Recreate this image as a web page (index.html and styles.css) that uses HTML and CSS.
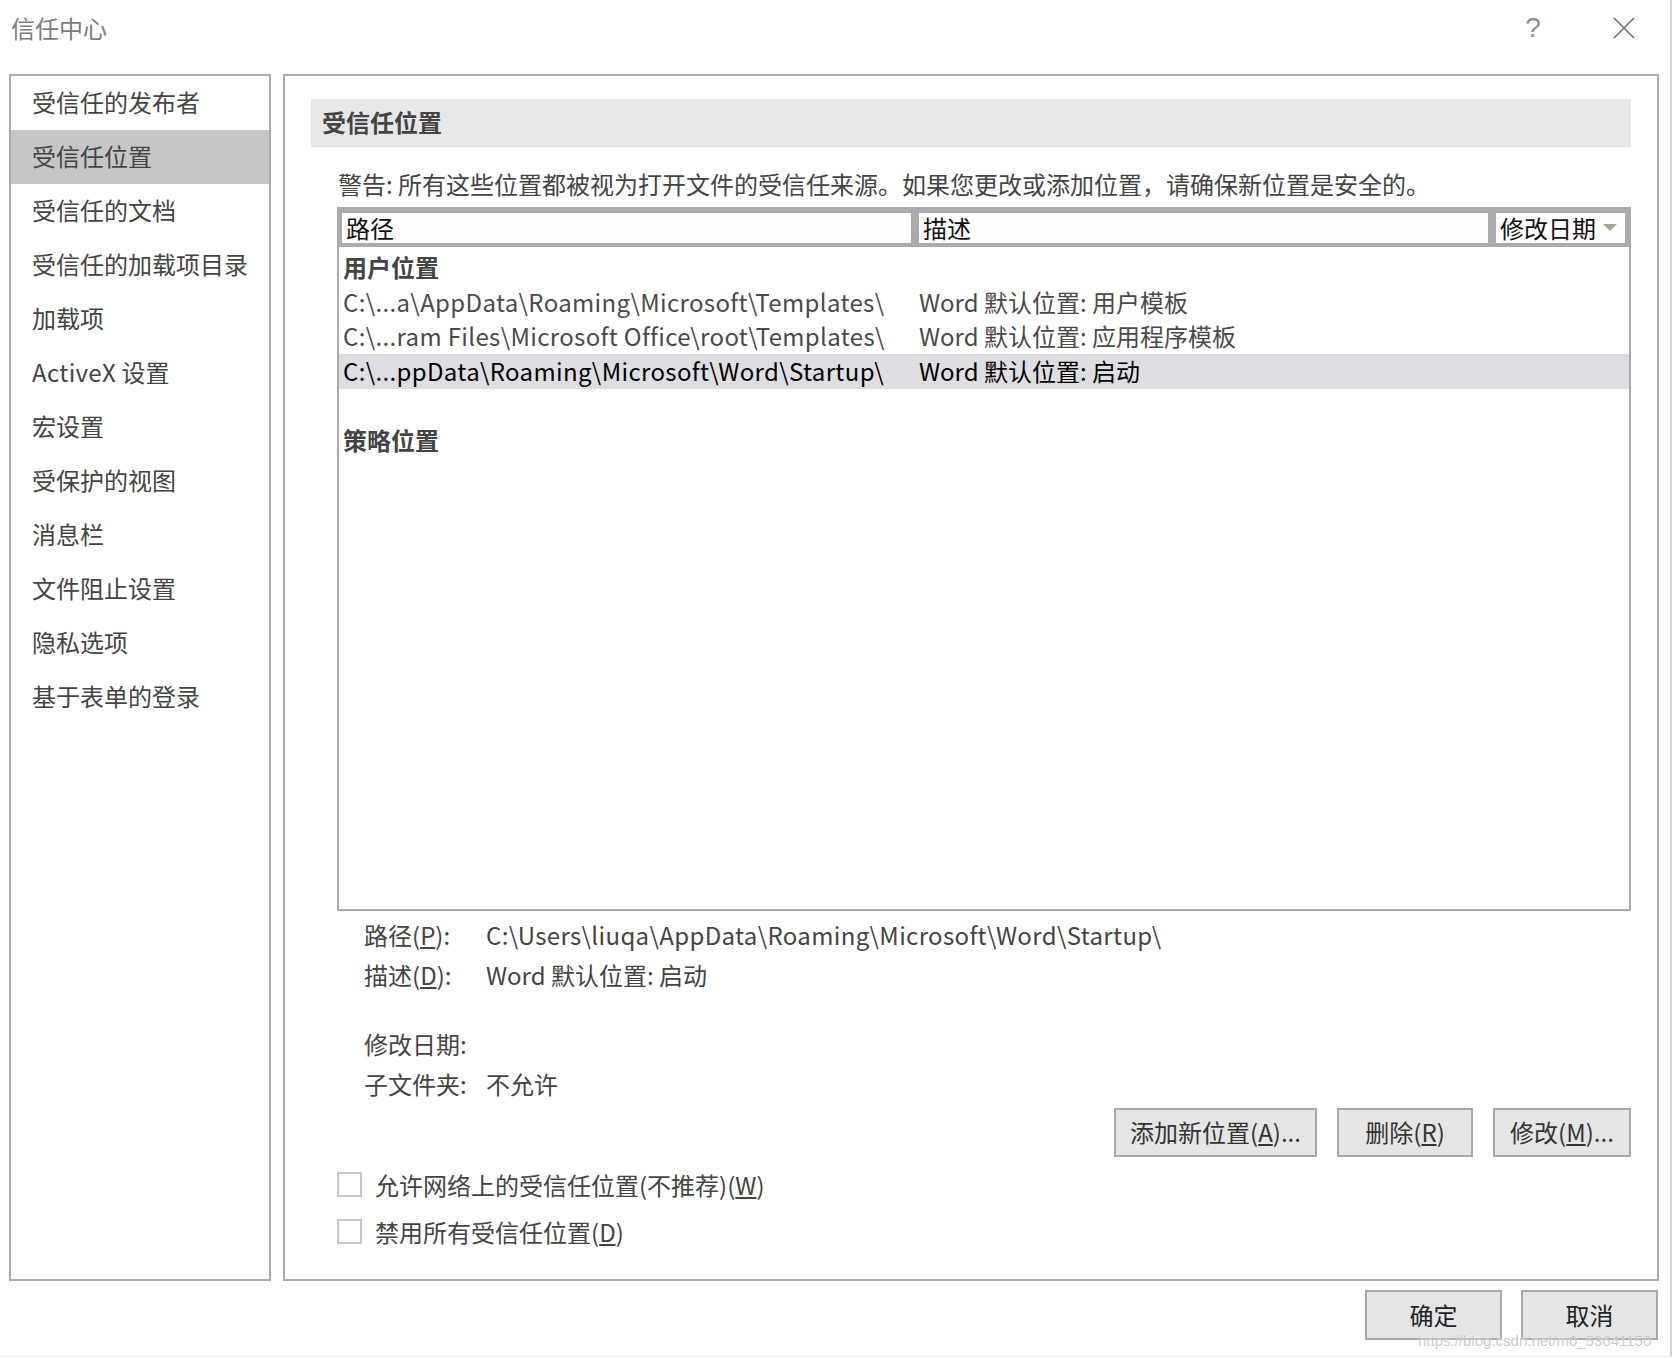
FILE: index.html
```html
<!DOCTYPE html>
<html lang="zh-CN">
<head>
    <meta charset="UTF-8">
    <title>信任中心</title>
    <link rel="stylesheet" href="styles.css">
</head>
<body>
<div class="dialog">
    <div class="titlebar">
        <span class="title">信任中心</span>
        <span class="help">?</span>
        <span class="close">
            <svg width="22" height="22" viewBox="0 0 22 22"><path d="M1 1 L21 21 M21 1 L1 21" stroke="#6f6f6f" stroke-width="1.6" fill="none"/></svg>
        </span>
    </div>

    <div class="main">
        <div class="nav">
            <div class="nav-item">受信任的发布者</div>
            <div class="nav-item active">受信任位置</div>
            <div class="nav-item">受信任的文档</div>
            <div class="nav-item">受信任的加载项目录</div>
            <div class="nav-item">加载项</div>
            <div class="nav-item"><span class="latin">ActiveX</span> 设置</div>
            <div class="nav-item">宏设置</div>
            <div class="nav-item">受保护的视图</div>
            <div class="nav-item">消息栏</div>
            <div class="nav-item">文件阻止设置</div>
            <div class="nav-item">隐私选项</div>
            <div class="nav-item">基于表单的登录</div>
        </div>

        <div class="content">
            <div class="section-title">受信任位置</div>
            <p class="warning">警告: 所有这些位置都被视为打开文件的受信任来源。如果您更改或添加位置，请确保新位置是安全的。</p>

            <div class="table">
                <div class="table-head">
                    <div class="th col-path">路径</div>
                    <div class="th col-desc">描述</div>
                    <div class="th col-date">修改日期
                        <svg width="14" height="8" viewBox="0 0 14 8"><polygon points="0,0 14,0 7,7" fill="#a6a698"/></svg>
                    </div>
                </div>
                <div class="table-body">
                    <div class="row group">用户位置</div>
                    <div class="row"><span class="cell-path latin">C:\...a\AppData\Roaming\Microsoft\Templates\</span><span>Word 默认位置: 用户模板</span></div>
                    <div class="row"><span class="cell-path latin">C:\...ram Files\Microsoft Office\root\Templates\</span><span>Word 默认位置: 应用程序模板</span></div>
                    <div class="row selected"><span class="cell-path latin">C:\...ppData\Roaming\Microsoft\Word\Startup\</span><span>Word 默认位置: 启动</span></div>
                    <div class="row"></div>
                    <div class="row group">策略位置</div>
                </div>
            </div>

            <div class="details">
                <div class="detail-row"><span class="label">路径(<u>P</u>):</span><span class="latin">C:\Users\liuqa\AppData\Roaming\Microsoft\Word\Startup\</span></div>
                <div class="detail-row"><span class="label">描述(<u>D</u>):</span><span>Word 默认位置: 启动</span></div>
                <div class="detail-row spaced"><span class="label">修改日期:</span><span></span></div>
                <div class="detail-row"><span class="label">子文件夹:</span><span>不允许</span></div>
            </div>

            <div class="actions">
                <div class="btn btn-add">添加新位置(<u>A</u>)...</div>
                <div class="btn btn-del">删除(<u>R</u>)</div>
                <div class="btn btn-edit">修改(<u>M</u>)...</div>
            </div>

            <div class="options">
                <div class="check-row"><span class="checkbox"></span><span>允许网络上的受信任位置(不推荐)(<u>W</u>)</span></div>
                <div class="check-row"><span class="checkbox"></span><span>禁用所有受信任位置(<u>D</u>)</span></div>
            </div>
        </div>
    </div>

    <div class="footer">
        <div class="btn btn-main">确定</div>
        <div class="btn btn-main">取消</div>
    </div>

    <div class="watermark">https://blog.csdn.net/m0_53641150</div>
</div>
</body>
</html>
```

FILE: styles.css
```css
* {
    box-sizing: border-box;
}

body {
    margin: 0;
    background-color: #ffffff;
    font-family: "Noto Sans CJK SC", "Noto Sans", sans-serif;
    font-size: 24px;
    color: #444444;
}

.dialog {
    position: relative;
    width: 1672px;
    height: 1357px;
    border-right: 2px solid #d4d4d4;
    border-bottom: 1px solid #ececec;
}

.latin {
    letter-spacing: 0.35px;
}

.titlebar {
    height: 74px;
    display: flex;
    align-items: flex-start;
    padding: 11px 26px 0 11px;
}

.title {
    line-height: 34px;
    color: #7c7c7c;
}

.help {
    margin-left: auto;
    width: 30px;
    text-align: center;
    line-height: 34px;
    font-size: 28px;
    color: #8c8c8c;
    font-family: "Liberation Sans", sans-serif;
}

.close {
    margin-left: 56px;
    width: 40px;
    height: 34px;
    display: flex;
    align-items: center;
    justify-content: center;
}

.main {
    display: flex;
    gap: 12px;
    padding-left: 9px;
    height: 1207px;
}

.nav {
    width: 262px;
    border: 2px solid #ababab;
}

.nav-item {
    height: 54px;
    line-height: 52px;
    padding-left: 21px;
    white-space: nowrap;
}

.nav-item.active {
    background-color: #c6c6c6;
}

.content {
    width: 1376px;
    border: 2px solid #ababab;
    padding: 23px 26px 0 0;
}

.section-title {
    margin-left: 26px;
    height: 48px;
    line-height: 45px;
    background-color: #e8e8e8;
    border-bottom: 1px solid #dedee4;
    padding-left: 11px;
    font-weight: bold;
}

.warning {
    margin: 21px 0 0 53px;
    line-height: 32px;
    height: 34px;
    white-space: nowrap;
}

.table {
    margin: 5px 0 0 52px;
}

.table-head {
    display: flex;
    gap: 8px;
    background-color: #ababab;
    padding: 6px 6px 4px 5px;
}

.th {
    background-color: #fdfdfd;
    height: 30px;
    line-height: 30px;
    padding-left: 4px;
    color: #111111;
    white-space: nowrap;
}

.col-path,
.col-desc {
    width: 569px;
}

.col-date {
    flex: 1;
    display: flex;
    align-items: center;
    justify-content: space-between;
    padding-right: 8px;
}

.table-body {
    height: 664px;
    border: 2px solid #ababab;
    border-top: none;
    padding-top: 3px;
}

.row {
    display: flex;
    height: 34.7px;
    line-height: 33px;
    padding-left: 4px;
    white-space: nowrap;
    color: #4a4a4a;
}

.row.group {
    font-weight: bold;
    color: #444444;
}

.row.selected {
    background-color: #dedee2;
    color: #000000;
}

.cell-path {
    width: 576px;
}

.details {
    margin-top: 5px;
    padding-left: 79px;
}

.detail-row {
    display: flex;
    height: 40px;
    line-height: 38px;
    white-space: nowrap;
}

.detail-row.spaced {
    margin-top: 29px;
}

.label {
    width: 122px;
}

.actions {
    display: flex;
    justify-content: flex-end;
    gap: 20px;
    margin-top: 3px;
}

.btn {
    height: 49px;
    line-height: 44px;
    text-align: center;
    background-color: #e5e5e5;
    border: 2px solid #a8a8a8;
    color: #333333;
    white-space: nowrap;
}

.btn-add {
    width: 203px;
}

.btn-del {
    width: 136px;
}

.btn-edit {
    width: 138px;
}

.options {
    margin-top: 5px;
    padding-left: 52px;
}

.check-row {
    display: flex;
    align-items: center;
    gap: 13px;
    height: 44px;
    margin-bottom: 3px;
    white-space: nowrap;
}

.checkbox {
    width: 25px;
    height: 25px;
    border: 2px solid #c6c6c6;
    background-color: #ffffff;
}

.footer {
    display: flex;
    justify-content: flex-end;
    gap: 19px;
    margin-top: 9px;
    padding-right: 12px;
}

.btn-main {
    width: 137px;
    height: 50px;
    line-height: 45px;
    color: #222222;
}

.watermark {
    position: absolute;
    left: 1418px;
    top: 1332px;
    font-family: "Liberation Sans", sans-serif;
    font-size: 15px;
    color: rgba(185, 185, 185, 0.75);
    text-shadow: 0 0 2px #ffffff;
    white-space: nowrap;
}
```
